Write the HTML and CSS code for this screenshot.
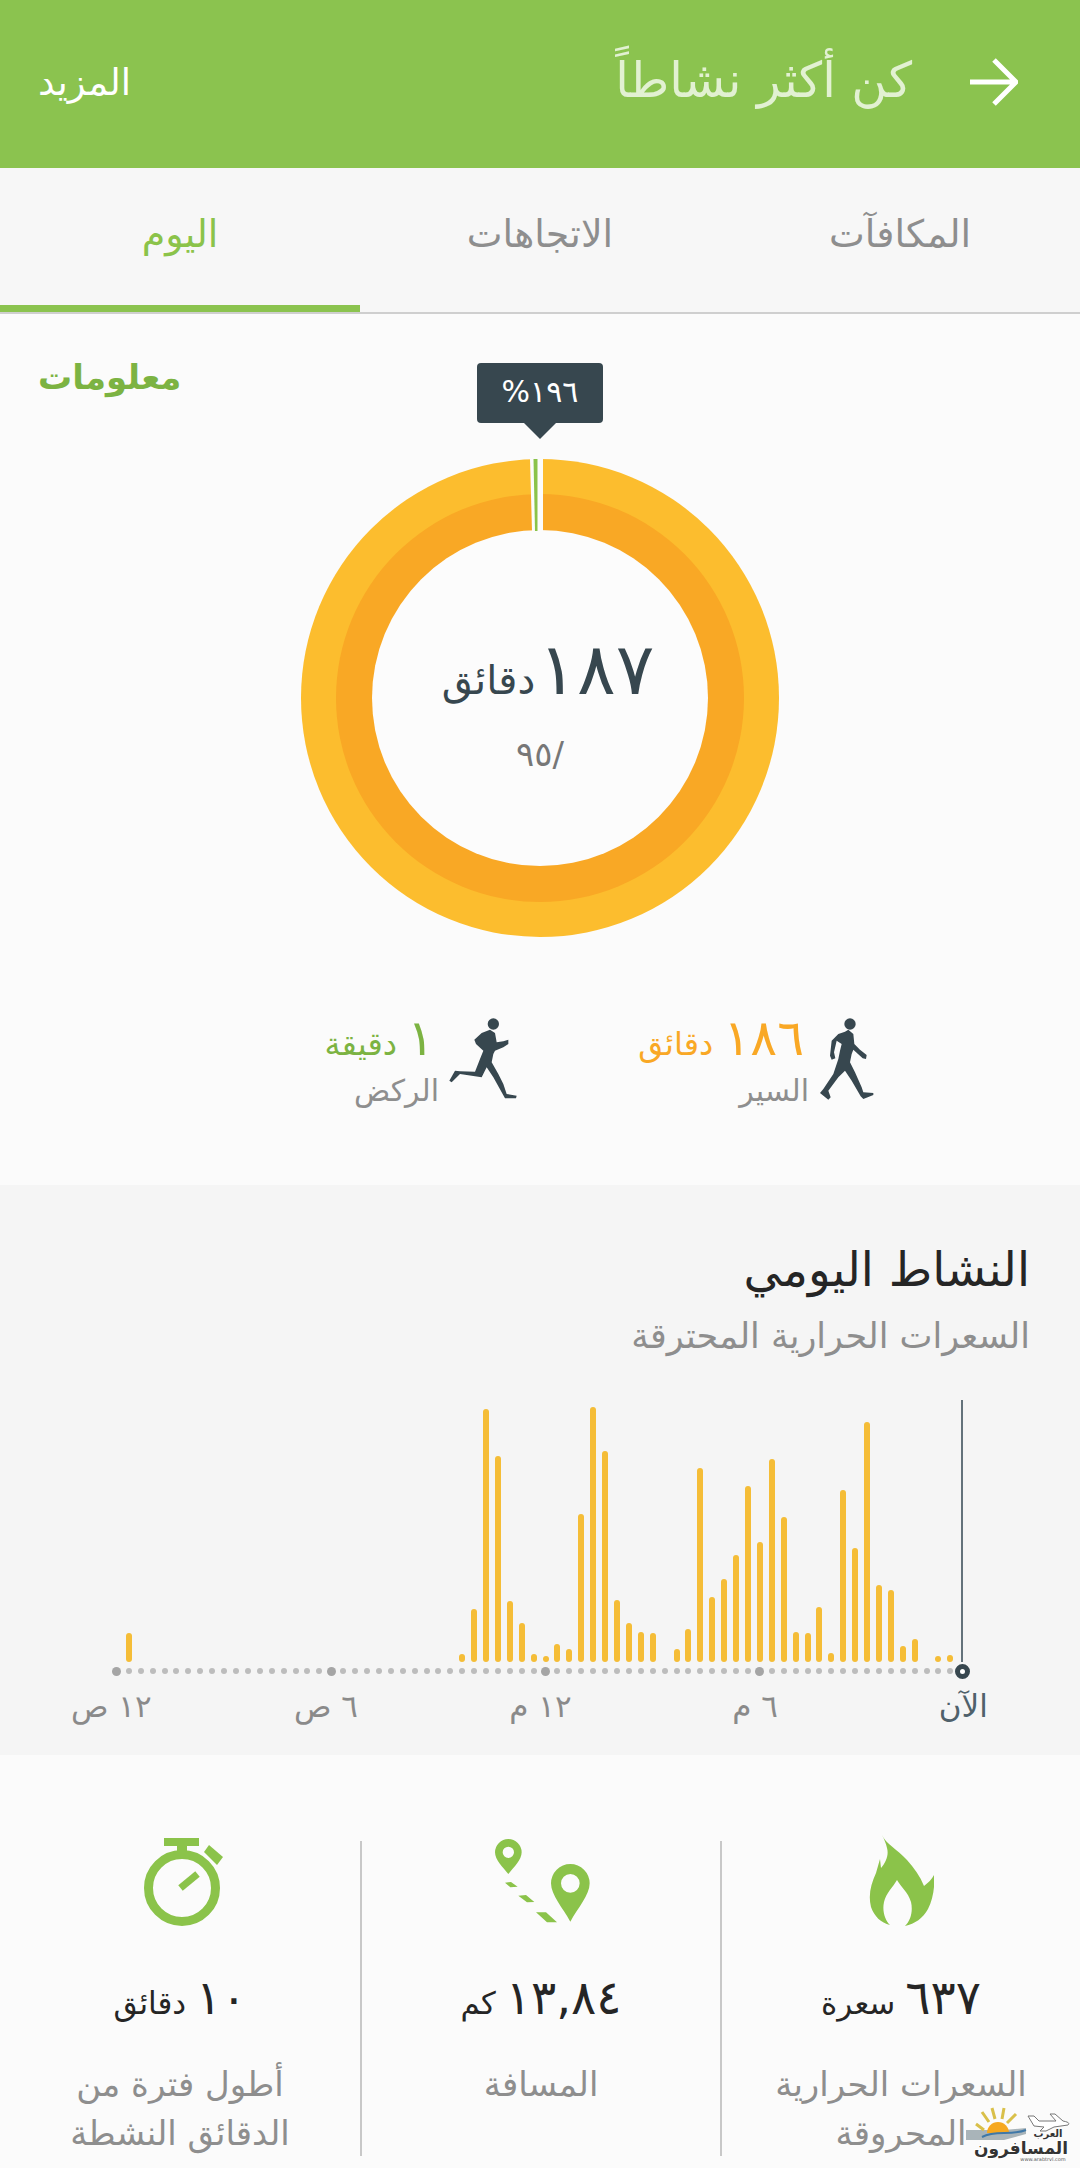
FILE: index.html
```html
<!DOCTYPE html>
<html lang="ar" dir="rtl">
<head>
    <meta charset="UTF-8">
    <meta name="viewport" content="width=device-width, initial-scale=1.0">
    <title>كن أكثر نشاطاً</title>
    <link rel="stylesheet" href="styles.css">
</head>
<body>

    <header class="topbar">
        <svg class="back-arrow" viewBox="0 0 48 48" fill="none" stroke="#fff" stroke-width="5">
            <path d="M0 24H45M24 2L46 24L24 46"/>
        </svg>
        <h1 class="topbar-title">كن أكثر نشاطاً</h1>
        <span class="topbar-more">المزيد</span>
    </header>

    <nav class="tabs">
        <div class="tab">المكافآت</div>
        <div class="tab">الاتجاهات</div>
        <div class="tab active">اليوم</div>
    </nav>

    <section class="summary">
        <div class="info-row"><span class="info-link">معلومات</span></div>

        <div class="donut">
            <div class="donut-tip">١٩٦%</div>
            <svg class="donut-ring" viewBox="0 0 478 478">
                <circle cx="239" cy="239" r="239" fill="#fcbd2e"/>
                <circle cx="239" cy="239" r="204" fill="#f9a825"/>
                <circle cx="239" cy="239" r="168" fill="#fcfcfc"/>
                <path d="M229 0H242V72H231Z" fill="#fcfcfc"/>
                <path d="M232.500 0H236.500V72H234Z" fill="#8bc34a"/>
            </svg>
            <div class="donut-center">
                <div class="donut-value"><b>١٨٧</b><span>دقائق</span></div>
                <div class="donut-goal">/٩٥</div>
            </div>
        </div>

        <div class="stats">
            <div class="stat">
                <svg class="stat-icon walker" viewBox="0 0 240 300" fill="#37474f">
                    <circle cx="120" cy="45" r="17"/>
                    <path d="M115 62L130 75L133 105L150 122L170 138L168 150L158 148L130 122L125 135L120 160L135 190L155 235L160 250L190 252L190 258L160 270L152 262L125 215L105 185L85 205L55 245L62 265L55 272L30 252L40 240L70 195L85 150L90 125L95 105L80 95L72 130L76 148L65 152L60 140L65 95L85 75L105 68Z"/>
                </svg>
                <div class="stat-text">
                    <div class="stat-value walk"><b>١٨٦</b> دقائق</div>
                    <div class="stat-label">السير</div>
                </div>
            </div>
            <div class="stat">
                <svg class="stat-icon runner" viewBox="0 0 270 300" fill="#37474f">
                    <circle cx="160" cy="45" r="17"/>
                    <path d="M150 62L165 72L170 100L190 97L205 92L205 105L190 115L165 125L160 135L155 160L175 195L190 225L200 255L230 260L228 268L195 268L185 250L160 205L140 175L125 205L60 195L35 220L28 215L45 185L60 187L105 188L120 150L130 125L108 105L103 92L125 72Z"/>
                </svg>
                <div class="stat-text">
                    <div class="stat-value run"><b>١</b> دقيقة</div>
                    <div class="stat-label">الركض</div>
                </div>
            </div>
        </div>
    </section>

    <section class="activity">
        <h2 class="activity-title">النشاط اليومي</h2>
        <div class="activity-sub">السعرات الحرارية المحترقة</div>
        <div id="chart" class="chart" dir="ltr"></div>
        <div class="axis" dir="ltr">
            <span class="axis-label" dir="rtl">١٢ ص</span>
            <span class="axis-label" dir="rtl">٦ ص</span>
            <span class="axis-label" dir="rtl">١٢ م</span>
            <span class="axis-label" dir="rtl">٦ م</span>
            <span class="axis-label now">الآن</span>
        </div>
    </section>

    <section class="totals">
        <div class="total">
            <svg class="total-icon flame" viewBox="0 0 65 91" fill="#8bc34a">
                <path d="M13 0C17 9 28 14 38 25C45 33 51 41 55 51C59 48 63 44 65 40C66 52 64 64 59 74C54 83 46 89 36 91C42 85 44 76 42 67C39 57 32 52 28 45C24 52 17 58 15 67C13 76 16 85 21 90C12 88 5 81 2 72C-1 60 2 49 7 38L11 24L12 33C17 27 20 20 18 13C17 8 15 4 13 0Z"/>
            </svg>
            <div class="total-value"><b>٦٣٧</b> سعرة</div>
            <div class="total-label">السعرات الحرارية المحروقة</div>
        </div>
        <div class="total">
            <svg class="total-icon pins" viewBox="0 0 360 300" fill="#8bc34a">
                <path fill-rule="evenodd" d="M82 27A40 40 0 0 1 122 67C122 90 98 112 82 132C66 112 42 90 42 67A40 40 0 0 1 82 27ZM82 50A17 17 0 1 0 82 84A17 17 0 1 0 82 50Z"/>
                <path fill-rule="evenodd" d="M268 102A58 58 0 0 1 326 160C326 195 290 235 268 275C246 235 210 195 210 160A58 58 0 0 1 268 102ZM268 132A28 28 0 1 0 268 188A28 28 0 1 0 268 132Z"/>
                <path d="M72 158L90 156L110 170L88 172ZM112 197L135 195L160 216L138 217ZM165 247L195 247L228 277L198 277Z"/>
            </svg>
            <div class="total-value"><b>١٣,٨٤</b> كم</div>
            <div class="total-label">المسافة</div>
        </div>
        <div class="total">
            <svg class="total-icon stopwatch" viewBox="0 0 79 88" fill="#8bc34a">
                <circle cx="38" cy="50" r="33.500" fill="none" stroke="#8bc34a" stroke-width="9"/>
                <path d="M20 0H55V8H43V14H33V8H20Z"/>
                <path d="M65 7L79 19L73 27L60 14Z"/>
                <path d="M36.500 50L53.500 36" stroke="#8bc34a" stroke-width="7"/>
            </svg>
            <div class="total-value"><b>١٠</b> دقائق</div>
            <div class="total-label">أطول فترة من الدقائق النشطة</div>
        </div>
    </section>

    <svg class="watermark" viewBox="0 0 116 68">
        <path d="M2 30H40L62 28V34L40 40H2Z" fill="#a9b4b9"/>
        <path d="M12 24L20 30M18 12L25 22M28 8L31 19M40 8L38 19M52 14L43 23" stroke="#d9c04a" stroke-width="3"/>
        <path d="M23 33A11 11 0 0 1 45 33Z" fill="#f6a81f"/>
        <path d="M18 37C32 30 46 36 62 30" fill="none" stroke="#3f78a8" stroke-width="2"/>
        <path d="M64 16L70 16L75 21L92 21L86 14H91L99 21C104 22 106 23 104 25L90 27L82 31H76L80 27L70 26Z" fill="#fff" stroke="#777" stroke-width="1"/>
        <text class="wm-small" x="84" y="37" text-anchor="middle">العرب</text>
        <text class="wm-big" x="57" y="54" text-anchor="middle">المسافرون</text>
        <text class="wm-url" x="79" y="61" text-anchor="middle" dir="ltr">www.arabtrvl.com</text>
    </svg>

    <script>
        const chart = document.getElementById("chart");
        const bars = {
            1: 29, 29: 8, 30: 53, 31: 253, 32: 206, 33: 61, 34: 39, 35: 8, 36: 6, 37: 18, 38: 13,
            39: 148, 40: 255, 41: 211, 42: 62, 43: 39, 44: 30, 45: 29, 47: 13, 48: 33, 49: 194,
            50: 65, 51: 83, 52: 107, 53: 176, 54: 120, 55: 203, 56: 145, 57: 30, 58: 29, 59: 55,
            60: 9, 61: 172, 62: 114, 63: 240, 64: 77, 65: 72, 66: 16, 67: 23, 69: 6, 70: 7
        };

        for (let i = 0; i < 72; i++) {
            let slot = document.createElement("div");
            slot.classList.add("slot");

            if (bars[i]) {
                let bar = document.createElement("div");
                bar.classList.add("bar");
                bar.style.height = bars[i] + "px";
                slot.appendChild(bar);
            }

            let tick = document.createElement("div");
            tick.classList.add("tick");
            let dot = document.createElement("div");
            dot.classList.add("dot");
            if (i % 18 === 0) dot.classList.add("big");
            if (i === 71) {
                let line = document.createElement("div");
                line.classList.add("now-line");
                slot.appendChild(line);
                dot.classList.add("now-dot");
            }
            tick.appendChild(dot);
            slot.appendChild(tick);
            chart.appendChild(slot);
        }
    </script>

</body>
</html>
```

FILE: styles.css
```css
* {
    box-sizing: border-box;
}
html, body {
    margin: 0;
    padding: 0;
}
body {
    position: relative;
    width: 1080px;
    height: 2168px;
    overflow: hidden;
    font-family: "DejaVu Sans", sans-serif;
    background-color: #fbfbfb;
    color: #8e8e8e;
}

.topbar {
    display: flex;
    align-items: center;
    height: 168px;
    padding: 0 62px 0 38px;
    background-color: #8bc34f;
    color: #fff;
}
.back-arrow {
    width: 48px;
    height: 48px;
    margin-bottom: 4px;
}
.topbar-title {
    margin: 0 58px 8px 0;
    font-size: 49px;
    font-weight: normal;
    color: #e2f1d2;
}
.topbar-more {
    margin: 0 auto 3px 0;
    font-size: 37px;
}

.tabs {
    display: flex;
    height: 146px;
    background-color: #f7f7f7;
    border-bottom: 2px solid #cfcfcf;
}
.tab {
    flex: 1;
    display: flex;
    align-items: center;
    justify-content: center;
    padding-bottom: 12px;
    font-size: 38px;
    color: #8e8e8e;
}
.tab.active {
    color: #8bc34a;
    border-bottom: 7px solid #8bc34f;
    padding-bottom: 5px;
}

.summary {
    height: 871px;
    padding-top: 43px;
}
.info-row {
    height: 102px;
    padding-left: 38px;
    text-align: left;
}
.info-link {
    font-size: 34px;
    font-weight: bold;
    color: #7cb342;
}
.donut {
    position: relative;
    width: 478px;
    height: 478px;
    margin: 0 auto;
}
.donut-ring {
    display: block;
    width: 478px;
    height: 478px;
}
.donut-tip {
    position: absolute;
    top: -96px;
    left: 176px;
    width: 126px;
    height: 60px;
    border-radius: 4px;
    background-color: #37474f;
    color: #fff;
    font-size: 30px;
    line-height: 58px;
    text-align: center;
}
.donut-tip::after {
    content: "";
    position: absolute;
    top: 60px;
    left: 47px;
    border: 16px solid transparent;
    border-top-color: #37474f;
    border-bottom: none;
}
.donut-center {
    position: absolute;
    top: 168px;
    left: 89px;
    width: 300px;
    text-align: center;
}
.donut-value {
    display: flex;
    justify-content: center;
    align-items: baseline;
    gap: 3px;
    padding-left: 16px;
    color: #37474f;
    font-size: 40px;
}
.donut-value b {
    font-size: 72px;
    font-weight: normal;
}
.donut-goal {
    margin-top: 23px;
    font-size: 34px;
    color: #777;
}

.stats {
    display: flex;
    margin-top: 72px;
    padding-right: 206px;
}
.stat {
    display: flex;
    align-items: flex-start;
    gap: 1px;
    width: 357px;
}
.stat-icon {
    height: 100px;
}
.walker {
    width: 80px;
    margin-right: -16px;
}
.runner {
    width: 90px;
    margin-right: -13px;
}
.stat-value {
    margin-right: 5px;
    font-size: 32px;
    white-space: nowrap;
}
.stat-value b {
    font-size: 50px;
    font-weight: normal;
}
.walk {
    color: #f9a825;
}
.run {
    color: #7cb342;
}
.stat-label {
    margin-top: 6px;
    font-size: 30px;
}

.activity {
    height: 570px;
    padding-top: 57px;
    background-color: #f5f5f5;
}
.activity-title {
    margin: 0 50px 0 0;
    font-size: 47px;
    font-weight: normal;
    color: #252525;
}
.activity-sub {
    margin: 19px 50px 0 0;
    font-size: 35px;
}
.chart {
    display: grid;
    grid-template-columns: repeat(72, 11.92px);
    align-items: end;
    height: 280px;
    margin: 44px 0 0 111px;
}
.slot {
    display: flex;
    flex-direction: column;
    align-items: center;
    justify-content: flex-end;
}
.bar {
    width: 6px;
    border-radius: 3px;
    background-color: #f5bd37;
}
.now-line {
    width: 2px;
    height: 262px;
    background-color: #64727b;
}
.tick {
    display: flex;
    align-items: center;
    justify-content: center;
    width: 16px;
    height: 18px;
}
.dot {
    flex: none;
    width: 6px;
    height: 6px;
    border-radius: 50%;
    background-color: #bdbdbd;
}
.dot.big {
    width: 9px;
    height: 9px;
    background-color: #a5a5a5;
}
.dot.now-dot {
    width: 15px;
    height: 15px;
    border: 5.500px solid #37474f;
    background-color: #fff;
}
.axis {
    display: flex;
    margin: 8px 0 0 4px;
}
.axis-label {
    width: 214.600px;
    font-size: 31px;
    text-align: center;
    color: #8a8a8a;
}
.axis-label.now {
    width: 202px;
    color: #4f616b;
}

.totals {
    display: flex;
    padding-top: 86px;
}
.total {
    display: flex;
    flex-direction: column;
    align-items: center;
    width: 360px;
    height: 315px;
    padding: 0 30px;
    text-align: center;
    border-left: 2.500px solid #c8c8c8;
}
.total:last-child {
    border-left: none;
}
.total-icon {
    flex: none;
}
.flame {
    width: 65px;
    height: 91px;
    margin: -6px 0 0;
}
.pins {
    width: 120px;
    height: 100px;
    margin: -11px 0 -4px;
}
.stopwatch {
    width: 79px;
    height: 88px;
    margin: -3px 0 0 7px;
}
.total-value {
    margin-top: 44px;
    font-size: 31px;
    color: #252525;
}
.total-value b {
    font-size: 47px;
    font-weight: normal;
}
.total-label {
    margin-top: 35px;
    font-size: 34px;
    line-height: 49px;
}

.watermark {
    position: absolute;
    left: 964px;
    top: 2100px;
    width: 116px;
    height: 68px;
}
.wm-small {
    font-size: 10px;
    font-weight: bold;
    fill: #333;
}
.wm-big {
    font-size: 17px;
    font-weight: bold;
    fill: #333;
    stroke: #fff;
    stroke-width: 2px;
    paint-order: stroke;
}
.wm-url {
    font-size: 5px;
    fill: #555;
}
```
